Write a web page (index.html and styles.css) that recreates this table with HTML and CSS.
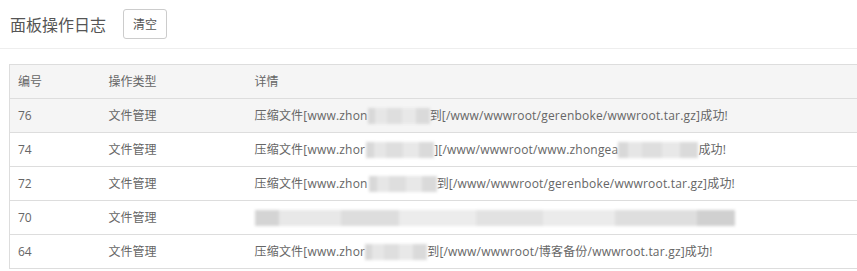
FILE: index.html
```html
<!DOCTYPE html>
<html lang="zh-CN">
<head>
<meta charset="utf-8">
<title>面板操作日志</title>
<link rel="stylesheet" href="styles.css">
</head>
<body>
<div class="page">
  <div class="topbar">
    <span class="title">面板操作日志</span>
    <button class="btn">清空</button>
  </div>
  <div class="content">
    <table class="log">
      <colgroup>
        <col class="c-id"><col class="c-type"><col>
      </colgroup>
      <thead>
        <tr><th>编号</th><th>操作类型</th><th>详情</th></tr>
      </thead>
      <tbody>
        <tr class="hover">
          <td>76</td><td>文件管理</td>
          <td class="detail">压缩文件[www.zhon<span class="mask m1"></span>到[/www/wwwroot/gerenboke/wwwroot.tar.gz]成功!</td>
        </tr>
        <tr>
          <td>74</td><td>文件管理</td>
          <td class="detail">压缩文件[www.zhor<span class="mask m2"></span>]<span>[/www/wwwroot/www.zhongea</span><span class="mask m3"></span>成功!</td>
        </tr>
        <tr>
          <td>72</td><td>文件管理</td>
          <td class="detail">压缩文件[www.zhon<span class="mask m2"></span>到[/www/wwwroot/gerenboke/wwwroot.tar.gz]成功!</td>
        </tr>
        <tr>
          <td>70</td><td>文件管理</td>
          <td class="detail"><span class="mask m4"></span></td>
        </tr>
        <tr>
          <td>64</td><td>文件管理</td>
          <td class="detail">压缩文件[www.zhor<span class="mask m1"></span>到[/www/wwwroot/博客备份/wwwroot.tar.gz]成功!</td>
        </tr>
      </tbody>
    </table>
  </div>
</div>
</body>
</html>
```
FILE: styles.css
```css
html, body {
  margin: 0;
  padding: 0;
  background: #fff;
  overflow: hidden;
}
body {
  font-family: "Open Sans", "Noto Sans CJK SC", sans-serif;
  color: #666;
}
.page {
  width: 857px;
}
.topbar {
  height: 48px;
  border-bottom: 1px solid #eee;
  display: flex;
  align-items: center;
  padding-left: 10px;
  gap: 17px;
}
.title {
  font-family: "Noto Sans CJK SC", sans-serif;
  font-size: 16px;
  color: #555;
  line-height: 20px;
}
.btn {
  height: 30px;
  padding: 0 9px;
  border: 1px solid #ccc;
  border-radius: 3px;
  background: #fff;
  color: #555;
  font-family: "Noto Sans CJK SC", sans-serif;
  font-size: 12px;
  line-height: 28px;
}
.content {
  padding: 15px 0 0 9px;
}
.log {
  width: 870px;
  border-collapse: collapse;
  border-left: 1px solid #ddd;
  border-top: 1px solid #ddd;
  font-size: 12px;
}
.c-id { width: 91px; }
.c-type { width: 146px; }
.log th, .log td {
  text-align: left;
  font-weight: normal;
  padding: 0 8px;
  height: 33px;
  line-height: 17px;
  border-bottom: 1px solid #ddd;
  white-space: nowrap;
  color: #666;
  vertical-align: middle;
}
.log td.detail {
  letter-spacing: 0.2px;
}
.log thead tr {
  background: #f5f5f5;
}
.log tr.hover {
  background: #f5f5f5;
}
.mask {
  display: inline-block;
  height: 16px;
  vertical-align: middle;
  filter: blur(1.5px);
  background: linear-gradient(90deg, #d8d8d8 0 12%, #e6e6e6 12% 30%, #dedede 30% 55%, #e8e8e8 55% 78%, #dadada 78% 100%);
}
.m1 { width: 62px; }
.m2 { width: 68px; margin-left: 1px; }
.m3 { width: 80px; }
.m4 { width: 480px; background: linear-gradient(90deg, #d4d4d4 0 5%, #e8e8e8 5% 18%, #dddddd 18% 30%, #ececec 30% 46%, #e2e2e2 46% 60%, #ebebeb 60% 75%, #dedede 75% 92%, #d0d0d0 92% 100%); }
```
